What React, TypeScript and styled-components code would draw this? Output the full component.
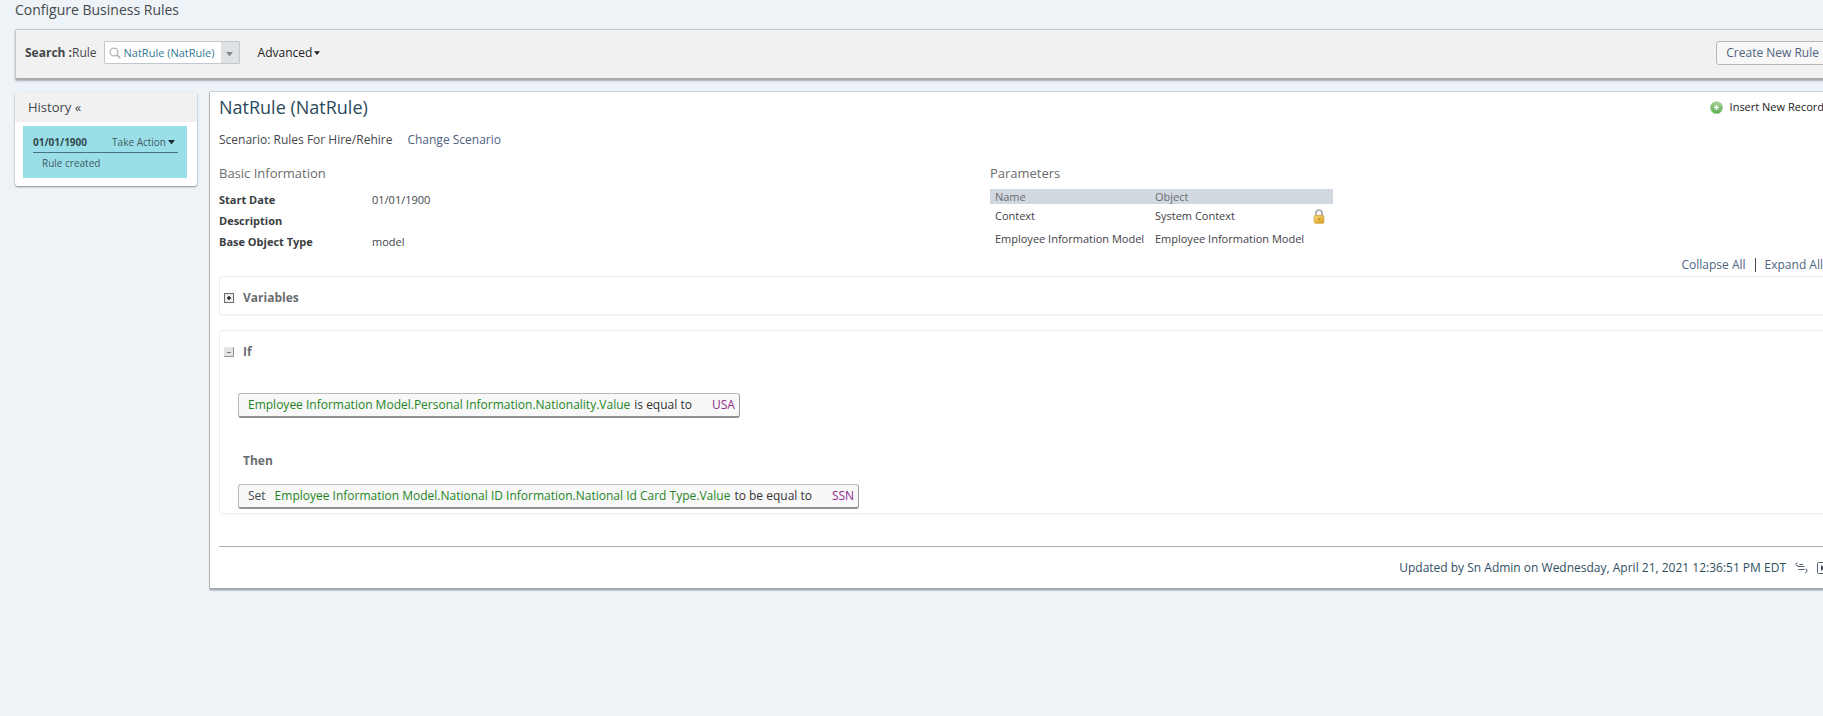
import React from "react";
import styled, { createGlobalStyle } from "styled-components";

const GlobalStyle = createGlobalStyle`
  *, *::before, *::after { box-sizing: border-box; }
  html, body { min-height: 100%; }
  body {
    margin: 0;
    overflow-x: hidden;
    background: #eef3f8;
    color: #44484c;
    font-family: "Open Sans", "Noto Sans", sans-serif;
    font-size: 12px;
    line-height: 20px;
  }
  button, input { font: inherit; color: inherit; }
  button { cursor: pointer; }
  a { color: #4f6380; text-decoration: none; }
  h1, h2, h3, p, dl, dd, dt { margin: 0; font-weight: 400; }
`;

const Page = styled.div`
  width: calc(100% + 40px);
  padding: 0 15px 24px 15px;
`;

const PageTitle = styled.h1`
  font-size: 14px;
  line-height: 20px;
  margin-bottom: 9px;
`;

const SearchBar = styled.form`
  display: flex;
  align-items: center;
  height: 51px;
  padding: 0 18px 3px 9px;
  background: #f1f1f1;
  border: 1px solid #c3c7cc;
  border-bottom: 2px solid #a8adb2;
  border-radius: 2px;
  box-shadow: 0 1px 2px rgba(60, 70, 80, 0.4);
`;

const SearchLabel = styled.label`
  margin-right: 7px;
`;

const ComboBox = styled.div`
  display: flex;
  align-items: center;
  width: 136px;
  height: 23px;
  padding-left: 4px;
  background: #fff;
  border: 1px solid #c2c7cc;
  border-radius: 1px;
`;

const ComboInput = styled.input`
  flex: 1;
  min-width: 0;
  height: 20px;
  padding: 0;
  margin-left: 3px;
  border: 0;
  outline: 0;
  background: none;
  font-size: 11px;
  color: #34798f;
`;

const ComboToggle = styled.button`
  display: flex;
  align-items: center;
  justify-content: center;
  width: 18px;
  height: 21px;
  padding: 3px 0 0;
  border: 0;
  background: #dfe2e5;
  color: #85898d;
`;

const PlainButton = styled.button<{ $tone?: string; $size?: number }>`
  display: inline-flex;
  align-items: center;
  gap: 2px;
  padding: 0;
  border: 0;
  background: none;
  line-height: 20px;
  font-size: ${(p) => p.$size ?? 12}px;
  color: ${(p) => p.$tone ?? "#222"};
`;

const Advanced = styled(PlainButton)`
  margin-left: 18px;
`;

const CreateButton = styled.button`
  height: 24px;
  margin-left: auto;
  padding: 0 9px;
  border: 1px solid #b4b8bd;
  border-radius: 3px;
  background: #f7f7f7;
  color: #4f6380;
  line-height: 20px;
`;

const Columns = styled.div`
  display: flex;
  align-items: flex-start;
  gap: 12px;
  margin-top: 11px;
`;

const HistoryPanel = styled.aside`
  flex: 0 0 182px;
  margin-top: 1px;
  padding-bottom: 8px;
  background: #fff;
  border-radius: 3px;
  box-shadow: 0 1px 2px rgba(60, 70, 80, 0.6);
`;

const HistoryHeader = styled.h2`
  padding: 5px 13px;
  background: #f1f1f1;
  border-radius: 3px 3px 0 0;
  font-size: 13px;
  line-height: 20px;
`;

const HistoryItem = styled.div`
  margin: 4px 10px 0 8px;
  padding: 6px 9px 5px 10px;
  background: #9adfe7;
  font-size: 10px;
  color: #3f5a60;
`;

const HistoryTop = styled.div`
  display: flex;
  justify-content: space-between;
  padding-right: 3px;
  border-bottom: 1px solid #44747d;

  strong { color: #33474c; }
  svg { color: #1c2a2e; }
`;

const HistoryNote = styled.p`
  padding-left: 9px;
`;

const MainPanel = styled.main`
  flex: 1;
  min-width: 0;
  padding: 4px 9px 10px;
  background: #fff;
  border: 1px solid #ccd1d6;
  border-left-color: #b4b8bd;
  border-bottom: 2px solid #a8adb2;
  border-radius: 2px;
  box-shadow: 0 1px 1px rgba(60, 70, 80, 0.25);
`;

const MainHeader = styled.header`
  display: flex;
  align-items: center;
  justify-content: space-between;
`;

const RuleTitle = styled.h2`
  font-size: 18px;
  line-height: 22px;
  color: #2b4a5e;
`;

const InsertButton = styled(PlainButton)`
  gap: 7px;
  margin-right: 14px;
`;

const Scenario = styled.p`
  display: flex;
  gap: 15px;
  margin-top: 12px;
`;

const Details = styled.div`
  display: flex;
  margin-top: 13px;
`;

const InfoColumn = styled.section`
  flex: 10 1 0;
`;

const ParamColumn = styled.section`
  flex: 11 1 0;
`;

const SubHeading = styled.h3`
  font-size: 13px;
  line-height: 20px;
  color: #6a6d70;
`;

const InfoList = styled.dl`
  display: grid;
  grid-template-columns: 153px 1fr;
  grid-auto-rows: 20px;
  row-gap: 1px;
  margin-top: 7px;
  font-size: 11px;

  dt { font-weight: 700; color: #3a3d40; }
`;

const ParamTable = styled.table`
  width: 343px;
  margin-top: 6px;
  border-collapse: collapse;
  table-layout: fixed;
  font-size: 11px;
  text-align: left;
  white-space: nowrap;

  th {
    height: 15px;
    padding: 0 5px;
    background: #d1d8df;
    color: #6a6d70;
    font-weight: 400;
    line-height: 15px;
  }
  td {
    height: 23px;
    padding: 0 5px;
    line-height: 20px;
    color: #3f4246;
  }
  th:last-child, td:last-child { padding: 0 8px 0 0; text-align: right; }
  svg { display: inline-block; vertical-align: middle; }
`;

const SectionTools = styled.div`
  display: flex;
  justify-content: flex-end;
  align-items: center;
  gap: 9px;
  margin: 3px 15px 1px 0;
`;

const Divider = styled.span`
  width: 1px;
  height: 14px;
  background: #44484c;
`;

const Section = styled.section`
  border: 1px solid #ececec;
  border-bottom: 2px solid #f3f3f3;
  border-radius: 4px;
  margin-bottom: 14px;
  padding: 9px 4px 4px;
`;

const SectionHead = styled.div`
  display: flex;
  align-items: center;
  gap: 9px;
  height: 24px;
`;

const ToggleButton = styled.button`
  display: flex;
  padding: 0;
  border: 0;
  background: none;
`;

const SectionTitle = styled.h3`
  font-size: 12px;
  font-weight: 700;
  color: #6a6d70;
`;

const ThenTitle = styled(SectionTitle)`
  margin: 33px 0 13px 19px;
`;

const Statement = styled.div<{ $first?: boolean }>`
  display: flex;
  width: max-content;
  height: 25px;
  margin-left: 14px;
  margin-top: ${(p) => (p.$first ? 29 : 0)}px;
  padding: 1px 4px 0 9px;
  border: 1px solid #b9bdb9;
  border-bottom: 2px solid #8f9290;
  border-right-color: #9a9d9a;
  border-radius: 3px;
  background: #f8f8f8;
`;

const Keyword = styled.span`
  margin-right: 9px;
`;

const Field = styled.span`
  margin-right: 4px;
  color: #1f841f;
`;

const Operator = styled.span`
  margin-right: 20px;
  color: #333;
`;

const Value = styled.span`
  color: #8c2f8c;
`;

const PanelFooter = styled.footer`
  display: flex;
  align-items: center;
  justify-content: flex-end;
  gap: 9px;
  margin-top: 31px;
  padding: 11px 9px 0 0;
  border-top: 1px solid #a8adb2;
  color: #2f4f5f;
`;

const CaretDown = ({ size = 6 }: { size?: number }) => (
  <svg width={size} height={size / 2 + 1} viewBox="0 0 8 5" aria-hidden="true">
    <path d="M0 0h8L4 5z" fill="currentColor" />
  </svg>
);

const SearchIcon = () => (
  <svg width="12" height="12" viewBox="0 0 12 12" fill="none" stroke="#b5b8bb" aria-hidden="true">
    <circle cx="5" cy="5" r="3.9" strokeWidth="1.4" />
    <path d="M8 8l3.2 3.2" strokeWidth="1.8" />
  </svg>
);

const AddIcon = () => (
  <svg width="13" height="13" viewBox="0 0 13 13" aria-hidden="true">
    <defs>
      <linearGradient id="addFill" x1="0" y1="0" x2="0" y2="1">
        <stop offset="0" stopColor="#a9d39c" />
        <stop offset="1" stopColor="#5fae50" />
      </linearGradient>
    </defs>
    <circle cx="6.5" cy="6.5" r="6.3" fill="url(#addFill)" />
    <path d="M6.5 4v5M4 6.5h5" stroke="#fff" strokeWidth="1.6" />
  </svg>
);

const LockIcon = () => (
  <svg width="12" height="15" viewBox="0 0 12 15" aria-hidden="true">
    <defs>
      <linearGradient id="lockFill" x1="0" y1="0" x2="1" y2="1">
        <stop offset="0" stopColor="#f6dc7c" />
        <stop offset="1" stopColor="#d99a1c" />
      </linearGradient>
    </defs>
    <path d="M3 7V4.2a3 3 0 0 1 6 0V7" fill="none" stroke="#a9adb0" strokeWidth="1.8" />
    <rect x="1.2" y="6.3" width="9.6" height="8" rx="1" fill="url(#lockFill)" stroke="#c89a34" strokeWidth="0.7" />
    <path d="M6 9.5v1.500" stroke="#a8741a" strokeWidth="1.4" />
  </svg>
);

const ExpandIcon = () => (
  <svg width="10" height="10" viewBox="0 0 10 10" aria-hidden="true">
    <rect x="0.5" y="0.5" width="9" height="9" fill="#ececec" stroke="#6b6e71" />
    <path d="M5 3v4M3 5h4" stroke="#222" strokeWidth="1.4" />
  </svg>
);

const CollapseIcon = () => (
  <svg width="10" height="10" viewBox="0 0 10 10" aria-hidden="true">
    <rect width="10" height="10" fill="#e4e4e4" />
    <path d="M9.5 0v9.5H0" fill="none" stroke="#929597" />
    <path d="M3 5.5h4" stroke="#77797b" />
  </svg>
);

const CompareIcon = () => (
  <svg width="13" height="12" viewBox="0 0 13 12" fill="none" stroke="#4f6070" aria-hidden="true">
    <path d="M2.500 1Q0.500 1.200 1 2.600Q1.500 4.500 4 4.500H9.500M4.500 2.500H8M3.500 7.500H9.500" />
    <path d="M10.500 7q1.700 0 1.500 1.700T10.200 11" />
  </svg>
);

const PanelIcon = () => (
  <svg width="12" height="12" viewBox="0 0 12 12" fill="none" stroke="#4f6070" aria-hidden="true">
    <rect x="0.5" y="0.5" width="11" height="11" rx="1" />
    <path d="M4 3v6l4-3z" fill="#3c4a63" stroke="none" />
  </svg>
);

export default function App() {
  return (
    <>
      <GlobalStyle />
      <Page>
        <PageTitle>Configure Business Rules</PageTitle>

        <SearchBar onSubmit={(e) => e.preventDefault()}>
          <SearchLabel htmlFor="rule-search">
            <strong>Search :</strong>Rule
          </SearchLabel>
          <ComboBox>
            <SearchIcon />
            <ComboInput id="rule-search" type="text" defaultValue="NatRule (NatRule)" />
            <ComboToggle type="button" aria-label="Show rules">
              <CaretDown size={7} />
            </ComboToggle>
          </ComboBox>
          <Advanced type="button">
            Advanced
            <CaretDown />
          </Advanced>
          <CreateButton type="button">Create New Rule</CreateButton>
        </SearchBar>

        <Columns>
          <HistoryPanel>
            <HistoryHeader>History «</HistoryHeader>
            <HistoryItem>
              <HistoryTop>
                <strong>01/01/1900</strong>
                <PlainButton type="button" $size={10} $tone="#3f5a60">
                  Take Action
                  <CaretDown size={7} />
                </PlainButton>
              </HistoryTop>
              <HistoryNote>Rule created</HistoryNote>
            </HistoryItem>
          </HistoryPanel>

          <MainPanel>
            <MainHeader>
              <RuleTitle>NatRule (NatRule)</RuleTitle>
              <InsertButton type="button" $size={11}>
                <AddIcon />
                Insert New Record
              </InsertButton>
            </MainHeader>
            <Scenario>
              <span>Scenario: Rules For Hire/Rehire</span>
              <a href="#scenario">Change Scenario</a>
            </Scenario>

            <Details>
              <InfoColumn>
                <SubHeading>Basic Information</SubHeading>
                <InfoList>
                  <dt>Start Date</dt>
                  <dd>01/01/1900</dd>
                  <dt>Description</dt>
                  <dd />
                  <dt>Base Object Type</dt>
                  <dd>model</dd>
                </InfoList>
              </InfoColumn>
              <ParamColumn>
                <SubHeading>Parameters</SubHeading>
                <ParamTable>
                  <colgroup>
                    <col width="160" />
                    <col width="155" />
                    <col />
                  </colgroup>
                  <thead>
                    <tr>
                      <th scope="col">Name</th>
                      <th scope="col">Object</th>
                      <th />
                    </tr>
                  </thead>
                  <tbody>
                    <tr>
                      <td>Context</td>
                      <td>System Context</td>
                      <td>
                        <LockIcon />
                      </td>
                    </tr>
                    <tr>
                      <td>Employee Information Model</td>
                      <td>Employee Information Model</td>
                      <td />
                    </tr>
                  </tbody>
                </ParamTable>
              </ParamColumn>
            </Details>

            <SectionTools>
              <a href="#collapse">Collapse All</a>
              <Divider />
              <a href="#expand">Expand All</a>
            </SectionTools>

            <Section>
              <SectionHead>
                <ToggleButton type="button" aria-label="Expand Variables">
                  <ExpandIcon />
                </ToggleButton>
                <SectionTitle>Variables</SectionTitle>
              </SectionHead>
            </Section>

            <Section>
              <SectionHead>
                <ToggleButton type="button" aria-label="Collapse If">
                  <CollapseIcon />
                </ToggleButton>
                <SectionTitle>If</SectionTitle>
              </SectionHead>
              <Statement $first>
                <Field>Employee Information Model.Personal Information.Nationality.Value</Field>
                <Operator>is equal to</Operator>
                <Value>USA</Value>
              </Statement>
              <ThenTitle>Then</ThenTitle>
              <Statement>
                <Keyword>Set</Keyword>
                <Field>Employee Information Model.National ID Information.National Id Card Type.Value</Field>
                <Operator>to be equal to</Operator>
                <Value>SSN</Value>
              </Statement>
            </Section>

            <PanelFooter>
              <span>Updated by Sn Admin on Wednesday, April 21, 2021 12:36:51 PM EDT</span>
              <ToggleButton type="button" aria-label="Compare versions">
                <CompareIcon />
              </ToggleButton>
              <ToggleButton type="button" aria-label="Show details">
                <PanelIcon />
              </ToggleButton>
            </PanelFooter>
          </MainPanel>
        </Columns>
      </Page>
    </>
  );
}
